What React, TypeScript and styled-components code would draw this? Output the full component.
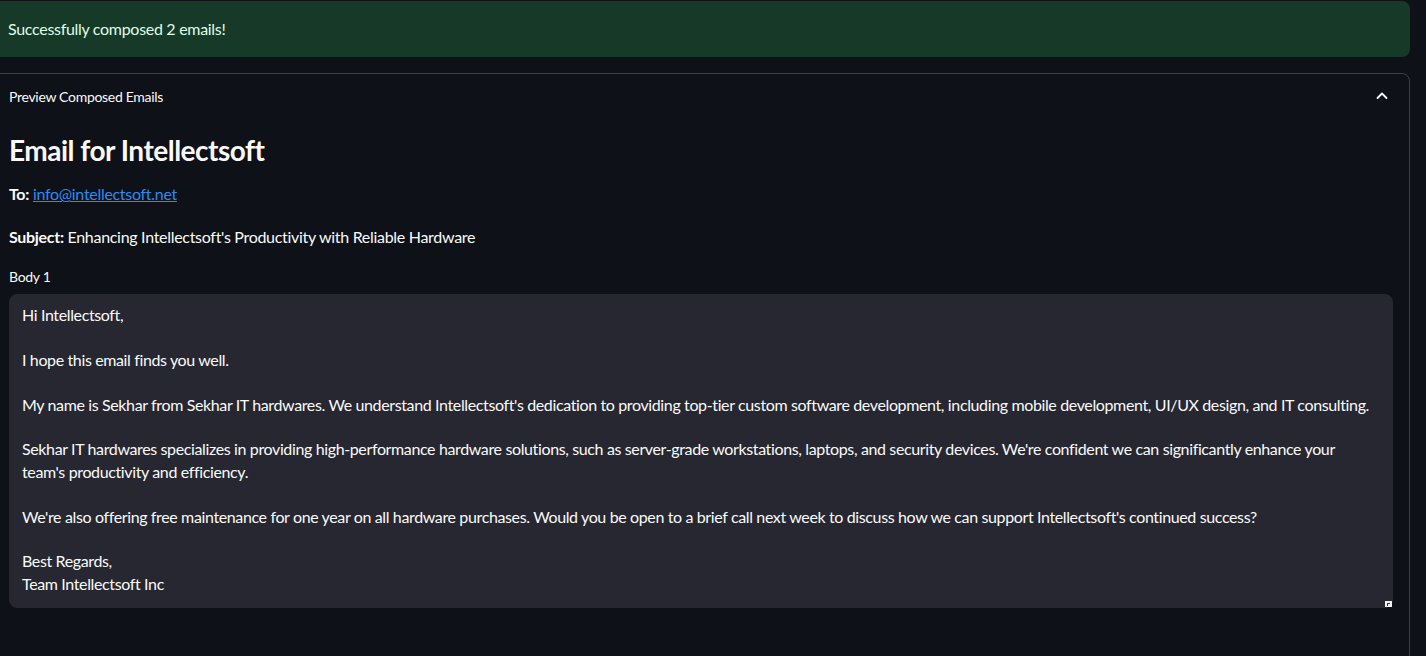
import React from "react";
import styled, { createGlobalStyle } from "styled-components";

const Global = createGlobalStyle`
  html, body { margin: 0; padding: 0; background: #0e1117; overflow: hidden; }
  body { font-family: "Source Sans Pro", Lato, "Noto Sans", sans-serif; color: #fafafa; letter-spacing: -0.3px; }
  * { box-sizing: border-box; }
`;

const Page = styled.div`
  width: 1418px;
  margin-left: -8px;
  padding-top: 1px;
  display: flex;
  flex-direction: column;
  gap: 16px;
  height: 656px;
`;

const Alert = styled.div`
  background: #173928;
  color: #dffde9;
  border-radius: 8px;
  padding: 16px;
  font-size: 16px;
  line-height: 24px;
`;

const Expander = styled.section`
  width: 1418px;
  border: 1px solid rgba(250, 250, 250, 0.2);
  border-radius: 8px;
  flex: 1;
  margin-bottom: -20px;
`;

const Summary = styled.div`
  display: flex;
  align-items: center;
  justify-content: space-between;
  padding: 12px 16px;
  font-size: 14px;
  line-height: 22px;
  color: #fafafa;
`;

const Chevron = styled.svg`
  width: 20px;
  height: 20px;
  margin-right: 0;
  margin-top: -2px;
`;

const Content = styled.div`
  padding: 13px 16px 16px;
`;

const Heading = styled.h2`
  margin: 0 0 14px;
  font-size: 28px;
  line-height: 34px;
  font-weight: 700;
  letter-spacing: -0.5px;
`;

const Para = styled.p<{ $gap: number }>`
  margin: 0 0 ${(p) => p.$gap}px;
  font-size: 16px;
  line-height: 26px;
`;

const Link = styled.a`
  color: #2a8bf2;
  text-decoration: underline;
`;

const Label = styled.label`
  display: block;
  font-size: 14px;
  line-height: 22px;
  margin-bottom: 6px;
`;

const Field = styled.div`
  position: relative;
  width: 1384px;
`;

const Body = styled.textarea`
  display: block;
  width: 100%;
  height: 314px;
  background: #262730;
  color: #fafafa;
  border: 1px solid #262730;
  border-radius: 8px;
  padding: 9px 12px 11px;
  font-family: inherit;
  letter-spacing: -0.37px;
  font-size: 16px;
  line-height: 22.4px;
  white-space: pre;
  overflow: hidden;
  outline: none;
  resize: none;
`;

const Grip = styled.svg`
  position: absolute;
  right: 1px;
  bottom: 1px;
  width: 7px;
  height: 6px;
`;

const text = `Hi Intellectsoft,

I hope this email finds you well.

My name is Sekhar from Sekhar IT hardwares. We understand Intellectsoft's dedication to providing top-tier custom software development, including mobile development, UI/UX design, and IT consulting.

Sekhar IT hardwares specializes in providing high-performance hardware solutions, such as server-grade workstations, laptops, and security devices. We're confident we can significantly enhance your
team's productivity and efficiency.

We're also offering free maintenance for one year on all hardware purchases. Would you be open to a brief call next week to discuss how we can support Intellectsoft's continued success?

Best Regards,
Team Intellectsoft Inc`;

export default function App() {
  return (
    <>
      <Global />
      <Page>
        <Alert>Successfully composed 2 emails!</Alert>
        <Expander>
          <Summary>
            <span>Preview Composed Emails</span>
            <Chevron viewBox="0 0 20 20" fill="none">
              <path d="M4.5 12 L9 7.5 L13.5 12" stroke="#fafafa" strokeWidth="1.8" strokeLinecap="round" strokeLinejoin="round" />
            </Chevron>
          </Summary>
          <Content>
            <Heading>Email for Intellectsoft</Heading>
            <Para $gap={17}>
              <strong>To:</strong> <Link href="#">info@intellectsoft.net</Link>
            </Para>
            <Para $gap={16}>
              <strong>Subject:</strong> Enhancing Intellectsoft's Productivity with Reliable Hardware
            </Para>
            <Label>Body 1</Label>
            <Field>
              <Body readOnly defaultValue={text} />
              <Grip viewBox="0 0 7 6">
                <rect x="0" y="0" width="7" height="6" fill="#f0f0f0" />
                <rect x="2" y="2" width="3" height="1" fill="#30313a" />
                <rect x="2" y="3" width="1" height="2" fill="#30313a" />
              </Grip>
            </Field>
          </Content>
        </Expander>
      </Page>
    </>
  );
}
